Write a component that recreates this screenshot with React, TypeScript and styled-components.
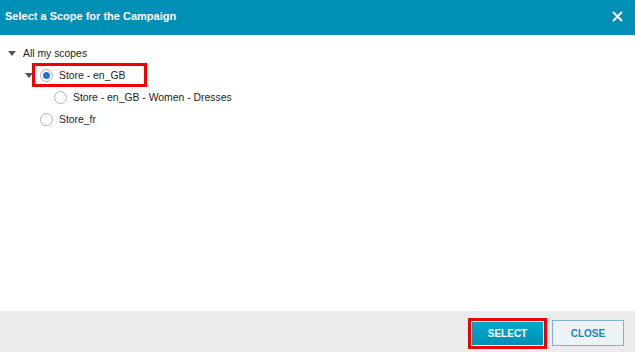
import styled, { createGlobalStyle } from "styled-components";

const GlobalStyle = createGlobalStyle`
    html, body {
        margin: 0;
        padding: 0;
        background: #ffffff;
    }
    body {
        font-family: "Liberation Sans", Arial, sans-serif;
    }
`;

type Scope = {
    label: string;
    depth: number;
    caret?: boolean;
    radio?: boolean;
    checked?: boolean;
    marked?: boolean;
};

const scopes: Scope[] = [
    { label: "All my scopes", depth: 0, caret: true },
    { label: "Store - en_GB", depth: 1, caret: true, radio: true, checked: true, marked: true },
    { label: "Store - en_GB - Women - Dresses", depth: 2, radio: true },
    { label: "Store_fr", depth: 1, radio: true },
];

function Caret(){
    return(
        <S.Caret>
            <svg width="8" height="5" viewBox="0 0 8 5">
                <path d="M0 0 L8 0 L4 5 Z" fill="#555" />
            </svg>
        </S.Caret>
    )
}

function ScopeRow({ scope }: { scope: Scope }){
    const content = (
        <>
            {scope.radio && <S.Radio $checked={!!scope.checked} />}
            <S.Label>{scope.label}</S.Label>
        </>
    );

    return(
        <S.Row $depth={scope.depth}>
            <S.CaretSlot>{scope.caret && <Caret />}</S.CaretSlot>
            {scope.marked ? <S.Marked>{content}</S.Marked> : <S.Plain>{content}</S.Plain>}
        </S.Row>
    )
}

function App(){
    return(
        <>
            <GlobalStyle />
            <S.Dialog>
                <S.Header>
                    <S.Title>Select a Scope for the Campaign</S.Title>
                    <S.CloseIcon>
                        <svg width="11" height="11" viewBox="0 0 11 11">
                            <path d="M1 1 L10 10 M10 1 L1 10" stroke="#fff" strokeWidth="1.8" />
                        </svg>
                    </S.CloseIcon>
                </S.Header>
                <S.Body>
                    {scopes.map((s) => (
                        <ScopeRow key={s.label} scope={s} />
                    ))}
                </S.Body>
                <S.Footer>
                    <S.Highlight>
                        <S.PrimaryButton>SELECT</S.PrimaryButton>
                    </S.Highlight>
                    <S.SecondaryButton>CLOSE</S.SecondaryButton>
                </S.Footer>
            </S.Dialog>
        </>
    )
}

const S = {

    Dialog: styled.div`
        width: 635px;
        height: 352px;
        display: flex;
        flex-direction: column;
        background: #ffffff;
    `,

    Header: styled.div`
        height: 35px;
        flex-shrink: 0;
        background: #008fb5;
        display: flex;
        align-items: center;
        justify-content: space-between;
        padding: 0 12px 3px 5px;
        box-sizing: border-box;
    `,

    Title: styled.div`
        color: #ffffff;
        font-size: 11px;
        font-weight: bold;
    `,

    CloseIcon: styled.div`
        display: flex;
        width: 11px;
        height: 11px;
    `,

    Body: styled.div`
        flex: 1;
        padding: 7px 0 0 8px;
        display: flex;
        flex-direction: column;
    `,

    Row: styled.div<{ $depth: number }>`
        display: flex;
        align-items: center;
        height: 22px;
        padding-left: ${(p) => (p.$depth === 2 ? 31 : p.$depth * 17)}px;
    `,

    CaretSlot: styled.div`
        width: 8px;
        display: flex;
        align-items: center;
        flex-shrink: 0;
    `,

    Caret: styled.span`
        display: flex;
    `,

    Plain: styled.div`
        display: flex;
        align-items: center;
        margin-left: -1px;
        border: 3px solid transparent;
        padding: 0 16px 0 5px;
        height: 18px;
    `,

    Marked: styled.div`
        display: flex;
        align-items: center;
        margin-left: -1px;
        border: 3px solid #f00000;
        padding: 0 19px 0 5px;
        height: 18px;
    `,

    Radio: styled.span<{ $checked: boolean }>`
        width: 11px;
        height: 11px;
        border-radius: 50%;
        border: 1px solid #b4b4b4;
        background: #ffffff;
        box-sizing: content-box;
        margin-right: 6px;
        position: relative;
        flex-shrink: 0;
        ${(p) => p.$checked && `
            border-color: #9fb4cf;
            &::after {
                content: "";
                position: absolute;
                left: 2px;
                top: 2px;
                width: 7px;
                height: 7px;
                border-radius: 50%;
                background: #2a6fdc;
            }
        `}
    `,

    Label: styled.span`
        font-size: 10.4px;
        color: #222222;
        white-space: nowrap;
    `,

    Footer: styled.div`
        height: 41px;
        flex-shrink: 0;
        background: #ececec;
        display: flex;
        align-items: center;
        justify-content: flex-end;
        gap: 5px;
        padding: 0 11px 0 0;
        box-sizing: border-box;
    `,

    Highlight: styled.div`
        border: 3px solid #f00000;
        padding: 1px;
        display: flex;
        margin-top: 4px;
    `,

    PrimaryButton: styled.div`
        width: 71px;
        height: 23px;
        background: linear-gradient(#00a8cb, #0090b4);
        color: #ffffff;
        font-size: 10px;
        font-weight: bold;
        display: flex;
        align-items: center;
        justify-content: center;
    `,

    SecondaryButton: styled.div`
        width: 70px;
        height: 24px;
        background: #edf2f7;
        border: 1px solid #7db3d6;
        color: #1b86b5;
        font-size: 10px;
        font-weight: bold;
        display: flex;
        align-items: center;
        justify-content: center;
        margin-top: 3px;
    `,

}

export default App;
